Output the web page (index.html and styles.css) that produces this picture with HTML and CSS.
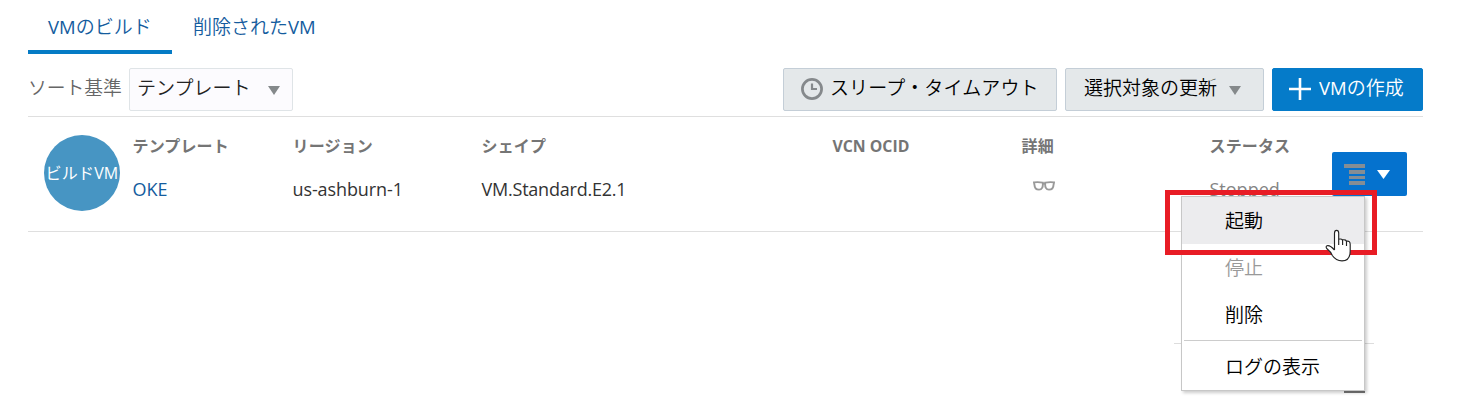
FILE: index.html
```html
<!DOCTYPE html>
<html lang="ja">
<head>
<meta charset="utf-8">
<title>VMのビルド</title>
<link rel="stylesheet" href="styles.css">
</head>
<body>
<main class="page">
  <nav class="tabs">
    <a class="tab active"><span class="latin">VM</span>のビルド</a>
    <a class="tab">削除された<span class="latin">VM</span></a>
  </nav>
  <div class="toolbar">
    <span class="sort-label">ソート基準</span>
    <div class="select">テンプレート<svg class="caret" width="12" height="9" viewBox="0 0 12 9"><path d="M0 0H12L6 9Z"/></svg></div>
    <div class="actions">
      <button class="btn sleep"><svg width="22" height="22" viewBox="0 0 22 22" fill="none" stroke="#85898c"><circle cx="11" cy="11" r="9.6" stroke-width="2.7"/><path d="M11 5.5V11H16" stroke-width="2.2"/></svg><span>スリープ・タイムアウト</span></button>
      <button class="btn update"><span>選択対象の更新</span><svg class="caret" width="12" height="9" viewBox="0 0 12 9"><path d="M0 0H12L6 9Z"/></svg></button>
      <button class="btn create"><svg width="22" height="22" viewBox="0 0 22 22"><path d="M11 0V22M0 11H22" stroke="#fff" stroke-width="2.6"/></svg><span><span class="latin">VM</span>の作成</span></button>
    </div>
  </div>
  <section class="row">
    <div class="badge"><span>ビルド<span class="latin">VM</span></span></div>
    <div class="col"><b>テンプレート</b><a class="value link">OKE</a></div>
    <div class="col"><b>リージョン</b><span class="value">us-ashburn-1</span></div>
    <div class="col"><b>シェイプ</b><span class="value shape">VM.Standard.E2.1</span></div>
    <div class="col"><b class="vcn">VCN OCID</b></div>
    <div class="col"><b>詳細</b><svg class="glasses" width="22" height="10" viewBox="0 0 22 10" fill="#fff" stroke="#999" stroke-width="1.9"><path d="M1 1.4Q5 .8 9.8 1.6Q10.4 8.6 6 8.6Q1.6 8.6 1.5 4ZM21 1.4Q17 .8 12.2 1.6Q11.6 8.6 16 8.6Q20.4 8.6 20.5 4Z"/><path d="M9.3 2.6H12.7"/></svg></div>
    <div class="col"><b>ステータス</b><span class="value stopped">Stopped</span></div>
    <button class="row-menu"><svg width="21" height="21" viewBox="0 0 21 21" fill="#858d94"><path d="M0 0H21V4H0ZM5 6H21V10H5ZM5 12H21V15H5ZM5 17H21V21H5Z"/></svg><svg width="13" height="9" viewBox="0 0 13 9"><path d="M0 0H13L6.5 9Z" fill="#fff"/></svg></button>
  </section>
</main>
<div class="behind-line"></div>
<div class="behind-edge"></div>
<div class="menu">
  <div class="item hover">起動</div>
  <div class="item disabled">停止</div>
  <div class="item">削除</div>
  <div class="separator"></div>
  <div class="item last">ログの表示</div>
</div>
<div class="highlight"></div>
<svg class="pointer" width="26" height="34" viewBox="0 0 26 34"><path d="M9.5 21V4.2Q9.5 1.4 11.6 1.4Q13.7 1.4 13.7 4.2V11Q15.5 9 17.8 11.2Q20 9.8 21.8 12.2Q25.3 11.5 25.3 15.5V22Q25.3 31.9 17 31.9Q11 31.8 7.3 26.5L2 19.8Q.3 17.5 2 16.7Q5 15.8 9.5 21Z" fill="#fff"/><path d="M9.5 21V4.2Q9.5 1.4 11.6 1.4Q13.7 1.4 13.7 4.2V16M13.7 10.2Q17.6 9.5 17.6 12V16M17.6 10.9Q21.5 10.3 21.5 13V17M21.5 12.2Q25.2 11.5 25.2 15.5V22Q25.2 31.9 17 31.9Q11 31.8 7.3 26.5Q6 23 2 19.8Q.3 17.5 2 16.7Q5 15.8 9.5 21" fill="none" stroke="#222" stroke-width="1.15"/></svg>
</body>
</html>
```
FILE: styles.css
```css
* { box-sizing: border-box; }
body { margin: 0; width: 1471px; height: 405px; overflow: hidden; background: #fff; color: #333; font: 350 19px/28px "Open Sans", "Noto Sans CJK JP", sans-serif; position: relative; white-space: nowrap; }
svg { display: block; flex: none; }
button { font: inherit; margin: 0; }
.page { width: 1395px; margin-left: 28px; }
.latin { font-size: 18.5px; font-weight: 400; }
.tabs { display: flex; height: 54px; }
.tab { height: 54px; padding: 13px 20px 0; color: #145c9e; }
.tab.active { width: 144px; border-bottom: 4px solid #057bc5; }
.tab:last-child { padding-left: 21px; }
.toolbar { display: flex; height: 63px; padding-top: 14px; border-bottom: 1px solid #dfdfdf; }
.sort-label { width: 101px; padding-top: 6px; color: #666; font-size: 18.8px; }
.select { width: 164px; height: 43px; display: flex; align-items: center; justify-content: space-between; border: 1px solid #dfe4e7; border-radius: 2px; background: #fcfbfe; padding: 0 12px 3px 7px; color: #222; }
.caret { fill: #85898b; margin-top: 5px; }
.update .caret { margin-top: 2px; }
.actions { display: flex; gap: 8px; margin-left: auto; }
.btn { height: 43px; display: flex; align-items: center; border: 1px solid #c4ced7; border-radius: 2px; background: #e4e8ea; color: #000; }
.btn > span { margin-top: -3px; }
.btn > svg:first-child { margin-top: -2px; }
.sleep { width: 274px; padding: 0 0 0 17px; gap: 7px; }
.sleep > span { letter-spacing: .1px; }
.update { width: 199px; padding: 0 0 0 18px; gap: 12px; }
.create { width: 151px; padding: 0 0 0 16px; gap: 8px; background: #057bc9; border-color: #057bc9; color: #fff; }
.row { height: 115px; border-bottom: 1px solid #dfdfdf; padding: 18px 16px 0; display: grid; grid-template-columns: 89px 160px 189px 351px 189px 188px 122px 75px; align-items: start; }
.badge { width: 76px; height: 76px; border-radius: 50%; background: #4795c3; display: grid; place-items: center; color: #fff; font-size: 16px; font-weight: 400; }
.badge span { letter-spacing: .2px; }
.badge .latin { font-size: 16px; }
.col { display: flex; flex-direction: column; margin-left: -.5px; }
.col b { height: 43px; line-height: 22px; font-size: 16px; letter-spacing: .15px; font-weight: 700; color: #757575; }
.col .vcn { font-size: 15.8px; letter-spacing: 0; }
.value { margin-top: -3px; font-size: 18px; letter-spacing: -.1px; font-weight: 400; }
.link { color: #145c9e; letter-spacing: 0; }
.shape { letter-spacing: -.22px; }
.stopped { color: #858585; letter-spacing: 0; }
.glasses { margin: 3px 0 0 11.5px; }
.row-menu { width: 75px; height: 44px; margin-top: 17px; border: 0; border-radius: 2px; background: #0572ce; display: flex; align-items: center; padding: 0 0 0 12px; gap: 12px; }
.behind-line { position: absolute; left: 1174px; top: 343px; width: 200px; height: 1px; background: #ddd; }
.behind-edge { position: absolute; left: 1344px; top: 391px; width: 21px; height: 2px; background: #777; }
.menu { position: absolute; left: 1181px; top: 196px; width: 184px; height: 195px; border: 1px solid #c7c7c7; background: #fff; color: #000; box-shadow: 2px 2px 3px #0003; }
.item { height: 47px; padding: 10px 0 0 43px; }
.hover { background: #ececee; }
.disabled { color: #999; }
.separator { height: 1px; margin: 2px 2px 0; background: #ccc; }
.last { padding-top: 12px; }
.highlight { position: absolute; left: 1165px; top: 190px; width: 212px; height: 65px; border: 5px solid #e81c25; }
.pointer { position: absolute; left: 1325px; top: 229px; }
```
